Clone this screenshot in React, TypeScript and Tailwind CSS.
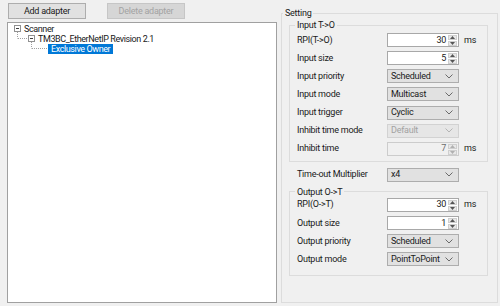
import React from 'react';

const FONT = "font-['Roboto','Liberation_Sans',Arial,sans-serif]";

const Chevron = ({ disabled }: { disabled?: boolean }) => (
  <svg width="8" height="5" viewBox="0 0 8 5" className="shrink-0">
    <polyline points="0.5,0.5 4,4 7.5,0.5" fill="none" stroke={disabled ? '#b4b4b4' : '#6a6a6a'} strokeWidth="1" />
  </svg>
);

const Spin = ({ disabled }: { disabled?: boolean }) => {
  const c = disabled ? '#b0b0b0' : '#555';
  return (
    <div className="flex flex-col w-[10px] h-full shrink-0 py-[1px] pr-[1px] gap-[1px]">
      <div className="flex-1 flex items-center justify-center bg-[#e8e8e8] border border-[#cfcfcf]">
        <svg width="5" height="3" viewBox="0 0 5 3"><polygon points="2.5,0 5,3 0,3" fill={c} /></svg>
      </div>
      <div className="flex-1 flex items-center justify-center bg-[#e8e8e8] border border-[#cfcfcf]">
        <svg width="5" height="3" viewBox="0 0 5 3"><polygon points="0,0 5,0 2.5,3" fill={c} /></svg>
      </div>
    </div>
  );
};

const NumberBox = ({ value, disabled }: { value: string; disabled?: boolean }) => (
  <div
    className={`flex items-stretch w-[72px] h-[14px] border ${
      disabled ? 'bg-[#f0f0f0] border-[#cccccc] text-[#6d6d6d]' : 'bg-white border-[#a8a8a8]'
    }`}
  >
    <div className="flex-1 flex items-center justify-end pr-[2px] leading-none">{value}</div>
    <Spin disabled={disabled} />
  </div>
);

const Combo = ({ value, disabled }: { value: string; disabled?: boolean }) => (
  <div
    className={`flex items-center justify-between w-[72px] h-[14px] pl-[3px] pr-[5px] border leading-none ${
      disabled ? 'bg-[#e6e6e6] border-[#d2d2d2] text-[#a2a2a2]' : 'bg-[#e1e1e1] border-[#adadad]'
    }`}
  >
    <span>{value}</span>
    <Chevron disabled={disabled} />
  </div>
);

type Row = { label: string; kind: 'num' | 'combo'; value: string; ms?: boolean; disabled?: boolean };

const FieldRow = ({ row }: { row: Row }) => (
  <div className="flex items-center h-[14px]">
    <div className="w-[90px] shrink-0 leading-none">{row.label}</div>
    {row.kind === 'num' ? (
      <NumberBox value={row.value} disabled={row.disabled} />
    ) : (
      <Combo value={row.value} disabled={row.disabled} />
    )}
    {row.ms && <span className="ml-[5px] leading-none">ms</span>}
  </div>
);

const inputRows: Row[] = [
  { label: 'RPI(T->O)', kind: 'num', value: '30', ms: true },
  { label: 'Input size', kind: 'num', value: '5' },
  { label: 'Input priority', kind: 'combo', value: 'Scheduled' },
  { label: 'Input mode', kind: 'combo', value: 'Multicast' },
  { label: 'Input trigger', kind: 'combo', value: 'Cyclic' },
  { label: 'Inhibit time mode', kind: 'combo', value: 'Default', disabled: true },
  { label: 'Inhibit time', kind: 'num', value: '7', ms: true, disabled: true },
];

const outputRows: Row[] = [
  { label: 'RPI(O->T)', kind: 'num', value: '30', ms: true },
  { label: 'Output size', kind: 'num', value: '1' },
  { label: 'Output priority', kind: 'combo', value: 'Scheduled' },
  { label: 'Output mode', kind: 'combo', value: 'PointToPoint' },
];

const TreeLine = { stroke: '#a0a0a0', strokeDasharray: '1 1' };

const App = () => {
  return (
    <div className={`w-[500px] h-[306px] bg-[#f0f0f0] flex text-[9px] tracking-[-0.25px] text-[#1a1a1a] ${FONT}`}>
      {/* left: adapters + tree */}
      <div className="w-[277px] shrink-0 pl-[7px] pt-[3px] pb-[3px] flex flex-col">
        <div className="flex gap-[21px] pl-[1px]">
          <button className="w-[78px] h-[16px] bg-[#e1e1e1] border border-[#adadad] leading-none">
            Add adapter
          </button>
          <button disabled className="w-[78px] h-[16px] bg-[#d6d6d6] border border-[#c6c6c6] text-[#a3a3a3] leading-none">
            Delete adapter
          </button>
        </div>
        <div className="mt-[3px] flex-1 bg-white border border-[#a0a0a0] pt-[1px] tracking-[-0.4px]">
          <div className="flex items-center h-[10px] leading-none">
            <svg width="16" height="10" viewBox="0 0 16 10" className="shrink-0">
              <rect x="6.5" y="1.5" width="6" height="6" fill="white" stroke="#919191" />
              <line x1="8" y1="4.5" x2="11" y2="4.5" stroke="#3c3c3c" />
              <line x1="9.5" y1="8" x2="9.5" y2="10" {...TreeLine} />
            </svg>
            <span>Scanner</span>
          </div>
          <div className="flex items-center h-[10px] leading-none">
            <svg width="30" height="10" viewBox="0 0 30 10" className="shrink-0">
              <line x1="9.5" y1="0" x2="9.5" y2="4.5" {...TreeLine} />
              <line x1="10" y1="4.5" x2="20" y2="4.5" {...TreeLine} />
              <rect x="20.5" y="1.5" width="6" height="6" fill="white" stroke="#919191" />
              <line x1="22" y1="4.5" x2="25" y2="4.5" stroke="#3c3c3c" />
              <line x1="23.5" y1="8" x2="23.5" y2="10" {...TreeLine} />
            </svg>
            <span>TM3BC_EtherNetIP Revision 2.1</span>
          </div>
          <div className="flex items-center h-[10px] leading-none">
            <svg width="40" height="10" viewBox="0 0 40 10" className="shrink-0">
              <line x1="23.5" y1="0" x2="23.5" y2="4.5" {...TreeLine} />
              <line x1="24" y1="4.5" x2="40" y2="4.5" {...TreeLine} />
            </svg>
            <span className="h-[10px] flex items-center px-[3px] bg-[#0078d7] text-white">Exclusive Owner</span>
          </div>
        </div>
      </div>

      {/* right: settings */}
      <fieldset className="ml-[4px] mt-[7px] w-[217px] h-[296px] border border-[#dcdcdc] px-0 pb-0">
        <legend className="ml-[1px] px-[2px] leading-[12px]">Setting</legend>

        <fieldset className="ml-[7px] mr-[9px] border border-[#dcdcdc] pt-[2px] pb-[5px] pl-[7px]">
          <legend className="-ml-[2px] px-[2px] leading-[12px]">Input T-&gt;O</legend>
          <div className="flex flex-col gap-[4.17px]">
            {inputRows.map((r) => (
              <FieldRow key={r.label} row={r} />
            ))}
          </div>
        </fieldset>

        <div className="mt-[6px] pl-[15px]">
          <FieldRow row={{ label: 'Time-out Multiplier', kind: 'combo', value: 'x4' }} />
        </div>

        <fieldset className="mt-[4px] ml-[7px] mr-[9px] border border-[#dcdcdc] pt-0 pb-[9px] pl-[7px]">
          <legend className="-ml-[2px] px-[2px] leading-[12px]">Output O-&gt;T</legend>
          <div className="flex flex-col gap-[4.17px]">
            {outputRows.map((r) => (
              <FieldRow key={r.label} row={r} />
            ))}
          </div>
        </fieldset>
      </fieldset>
    </div>
  );
};

export default App;
